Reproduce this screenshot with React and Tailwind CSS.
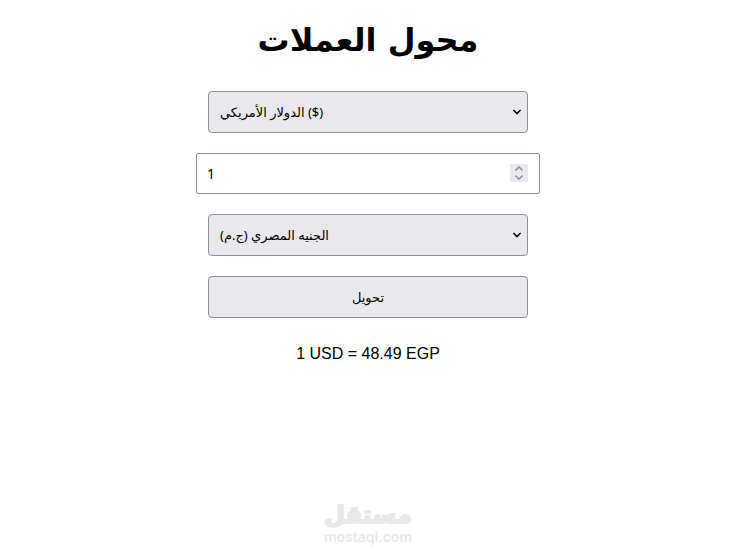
import { useState } from 'react'

const CURRENCIES = [
  { code: 'USD', label: 'الدولار الأمريكي ($)', rate: 1 },
  { code: 'EGP', label: 'الجنيه المصري (ج.م)', rate: 48.49 },
]

function CurrencySelect({ label, value, onChange }) {
  return (
    <div className="relative w-80 max-w-full">
      <select
        aria-label={label}
        value={value}
        onChange={e => onChange(e.target.value)}
        className="block h-[42px] w-full appearance-none rounded border border-[#8f8f9d] bg-[#e9e9ed] px-[11px] pt-[2px] font-['Noto_Sans','DejaVu_Sans',sans-serif] text-[13px] text-black"
      >
        {CURRENCIES.map(c => (
          <option key={c.code} value={c.code}>{c.label}</option>
        ))}
      </select>
      <svg viewBox="0 0 8 6" className="pointer-events-none absolute top-[18px] right-[7px] h-[6px] w-2" fill="none" stroke="#000" strokeWidth="1.5">
        <path d="M0.4 0.9 L4 4.6 L7.6 0.9" />
      </svg>
    </div>
  )
}

function AmountInput({ value, onChange }) {
  const step = d => onChange(String(Number(value) + d))

  return (
    <div className="relative w-[344px] max-w-full">
      <input
        type="number"
        aria-label="المبلغ"
        value={value}
        onChange={e => onChange(e.target.value)}
        className="block h-[41px] w-full appearance-none rounded-xs border border-[#8f8f9d] bg-white px-[10px] font-['Noto_Sans','DejaVu_Sans',sans-serif] text-[14px] text-black [-moz-appearance:textfield] [&::-webkit-inner-spin-button]:appearance-none"
      />
      <div className="absolute top-[11px] right-3 flex h-[18px] w-[18px] flex-col bg-[#e9e9ed]">
        <button type="button" aria-label="زيادة" onClick={() => step(1)} className="flex flex-1 items-center justify-center">
          <svg viewBox="0 0 8 5" className="h-[5px] w-2" fill="none" stroke="#8f8f9d" strokeWidth="1.5">
            <path d="M0.4 4.4 L4 0.9 L7.6 4.4" />
          </svg>
        </button>
        <button type="button" aria-label="إنقاص" onClick={() => step(-1)} className="flex flex-1 items-center justify-center">
          <svg viewBox="0 0 8 5" className="h-[5px] w-2" fill="none" stroke="#8f8f9d" strokeWidth="1.5">
            <path d="M0.4 0.6 L4 4.1 L7.6 0.6" />
          </svg>
        </button>
      </div>
    </div>
  )
}

export default function App() {
  const [from, setFrom] = useState('USD')
  const [to, setTo] = useState('EGP')
  const [amount, setAmount] = useState('1')
  const [result, setResult] = useState('1 USD = 48.49 EGP')

  const convert = () => {
    const a = CURRENCIES.find(c => c.code === from)
    const b = CURRENCIES.find(c => c.code === to)
    const total = (Number(amount) / a.rate) * b.rate
    setResult(`${amount} ${from} = ${total.toFixed(2)} ${to}`)
  }

  return (
    <div className="flex min-h-screen flex-col items-center bg-white px-2 pt-5 pb-[10px] font-['Liberation_Sans','DejaVu_Sans',sans-serif] text-black">
      <h1 className="mb-[30px] font-['DejaVu_Sans',sans-serif] text-[32px] leading-[41px] font-bold">محول العملات</h1>

      <main className="flex w-full flex-col items-center gap-5">
        <CurrencySelect label="من" value={from} onChange={setFrom} />
        <AmountInput value={amount} onChange={setAmount} />
        <CurrencySelect label="إلى" value={to} onChange={setTo} />
        <button
          type="button"
          onClick={convert}
          className="h-[42px] w-80 max-w-full rounded border border-[#8f8f9d] bg-[#e9e9ed] pt-[2px] font-['Noto_Sans','DejaVu_Sans',sans-serif] text-[13px]"
        >
          تحويل
        </button>
        <p className="mt-1 text-base">{result}</p>
      </main>

      <footer className="mt-auto flex flex-col items-center text-[#e8e8eb]">
        <span className="font-['DejaVu_Sans',sans-serif] text-[24px] leading-7 font-bold [-webkit-text-stroke:2px_#e8e8eb] [stroke-linejoin:round]">مستقل</span>
        <span className="font-['Inter',sans-serif] text-[14px] leading-4 font-semibold">mostaql.com</span>
      </footer>
    </div>
  )
}
